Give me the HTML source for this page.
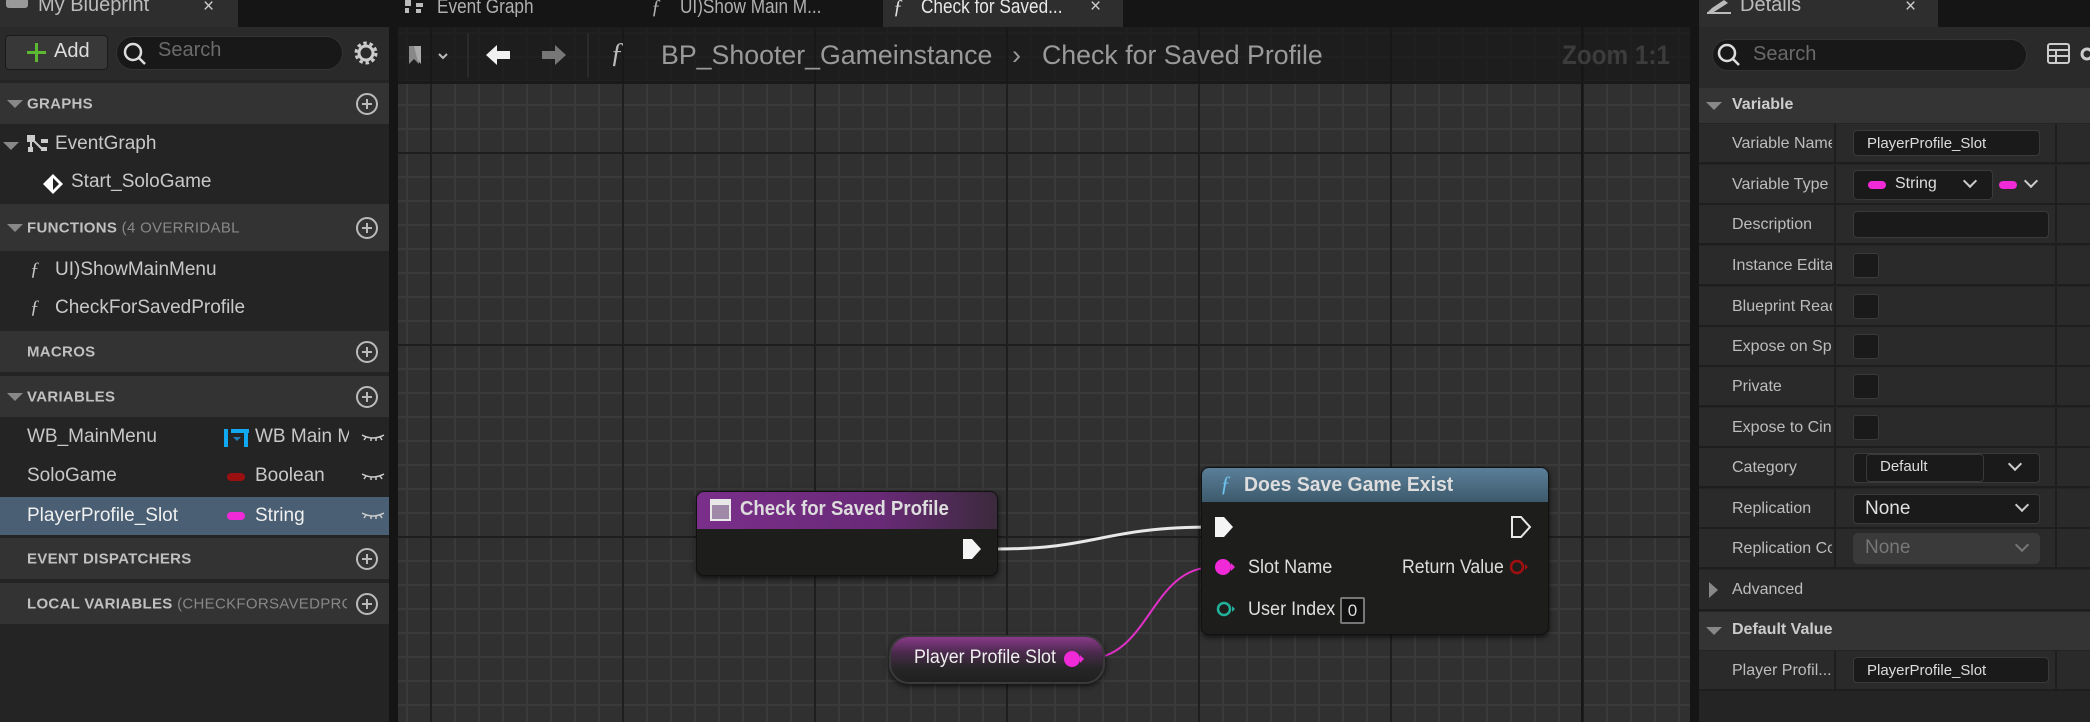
<!DOCTYPE html>
<html><head><meta charset="utf-8"><style>
*{margin:0;padding:0;box-sizing:border-box}
body{width:2090px;height:722px;overflow:hidden;background:#151515;font-family:"Liberation Sans",sans-serif;color:#c8c8c8;position:relative}
.a{position:absolute}
.t{position:absolute;white-space:nowrap}
.hdr{position:absolute;left:0;width:389px;background:#333;}
.hdr .tri{position:absolute;left:7px;top:50%;margin-top:-4px;width:0;height:0;border-left:8px solid transparent;border-right:8px solid transparent;border-top:8px solid #888}
.hdr .lbl{position:absolute;left:27px;top:50%;transform:translateY(-50%);font-size:15px;font-weight:bold;color:#c0c0c0;letter-spacing:.3px;white-space:nowrap;overflow:hidden}
.hdr .lbl span{font-weight:normal;color:#888}
.plus{position:absolute;right:11px;top:50%;margin-top:-11px;width:22px;height:22px;border:2px solid #bbb;border-radius:50%}
.plus:before{content:"";position:absolute;left:4px;top:8px;width:10px;height:2px;background:#bbb}
.plus:after{content:"";position:absolute;left:8px;top:4px;width:2px;height:10px;background:#bbb}
.item{position:absolute;font-size:19px;color:#c8c8c8;white-space:nowrap}
.row{position:absolute;left:1699px;width:391px;height:40px;background:#2a2a2a;border-bottom:2px solid #1e1e1e}
.row .l{position:absolute;left:33px;top:11px;font-size:16px;color:#bdbdbd;width:100px;overflow:hidden;white-space:nowrap}
.row .d1{position:absolute;left:135px;top:0;bottom:0;width:2px;background:#1e1e1e}
.row .d2{position:absolute;left:356px;top:0;bottom:0;width:2px;background:#1e1e1e}
.box{position:absolute;background:#1a1a1a;border:1px solid #3a3a3a;border-radius:4px}
.chk{position:absolute;left:154px;top:7px;width:26px;height:25px;background:#1a1a1a;border:1px solid #3a3a3a;border-radius:3px}
.chev{position:absolute;width:10px;height:10px;border-right:2px solid #ccc;border-bottom:2px solid #ccc;transform:rotate(45deg)}
.pill{position:absolute;width:18px;height:8px;border-radius:4px;background:#f02ad6}
.cond{display:inline-block;transform:scaleX(.86);transform-origin:left center}
</style></head><body>

<!-- graph background -->
<div class="a" style="left:398px;top:27px;width:1299px;height:695px;background-color:#303030;
background-image:linear-gradient(to right,#1e1e1e 0,#1e1e1e 2px,transparent 2px),linear-gradient(to bottom,#1e1e1e 0,#1e1e1e 2px,transparent 2px),linear-gradient(to right,#3a3a3a 0,#3a3a3a 2px,transparent 2px),linear-gradient(to bottom,#3a3a3a 0,#3a3a3a 2px,transparent 2px);
background-size:192px 192px,192px 192px,24px 24px,24px 24px;background-position:32px 125px,32px 125px,8px 5px,8px 5px"></div>
<div class="a" style="left:1581px;top:27px;width:2px;height:695px;background:#161616"></div>
<!-- graph toolbar -->
<div class="a" style="left:398px;top:27px;width:1299px;height:56px;background:rgba(22,22,22,.72)"></div>
<div class="a" style="left:398px;top:81px;width:1299px;height:3px;background:#1a1a1a"></div>
<svg class="a" style="left:405px;top:44px" width="50" height="24"><path d="M4 2h10v18l-5-5-5 5z" fill="#888"/><path d="M9 2h7v18l-3.5-4" fill="#aaa"/><path d="M34 10l4 4 4-4" stroke="#bbb" stroke-width="2" fill="none"/></svg>
<div class="a" style="left:467px;top:33px;width:2px;height:45px;background:#2a2a2a"></div>
<svg class="a" style="left:484px;top:42px" width="90" height="28"><path d="M2 13l11-10v6h13v8h-13v6z" fill="#f0f0f0"/><path d="M82 13l-11-10v6h-13v8h13v6z" fill="#777"/></svg>
<div class="a" style="left:587px;top:33px;width:2px;height:45px;background:#2a2a2a"></div>
<div class="t" style="left:610px;top:38px;font-size:28px;font-style:italic;font-family:'Liberation Serif',serif;color:#bbb">ƒ</div>
<div class="t" style="left:661px;top:40px;font-size:27px;color:#9a9a9a"><span class="cond" style="transform:scaleX(.99)">BP_Shooter_Gameinstance</span></div>
<div class="t" style="left:1012px;top:40px;font-size:27px;color:#9a9a9a">›</div>
<div class="t" style="left:1042px;top:40px;font-size:27px;color:#9a9a9a"><span class="cond" style="transform:scaleX(.99)">Check for Saved Profile</span></div>
<div class="t" style="left:1562px;top:40px;font-size:27px;font-weight:bold;color:#3c3c3c"><span class="cond" style="transform:scaleX(.9)">Zoom 1:1</span></div>

<!-- graph tabs -->
<svg class="a" style="left:404px;top:0" width="22" height="14"><rect x="1" y="0" width="6" height="6" fill="#bbb"/><rect x="1" y="8" width="4" height="5" fill="#bbb"/><rect x="12" y="3" width="7" height="4" fill="#bbb"/><rect x="12" y="9" width="5" height="4" fill="#bbb"/></svg>
<div class="t" style="left:437px;top:-4px;font-size:20px;color:#b0b0b0"><span class="cond">Event Graph</span></div>
<div class="t" style="left:651px;top:-4px;font-size:20px;font-style:italic;font-family:'Liberation Serif',serif;color:#b0b0b0">ƒ</div>
<div class="t" style="left:680px;top:-4px;font-size:20px;color:#b0b0b0"><span class="cond">UI)Show Main M...</span></div>
<div class="a" style="left:883px;top:0;width:240px;height:27px;background:#2e2e2e"></div>
<div class="t" style="left:893px;top:-4px;font-size:20px;font-style:italic;font-family:'Liberation Serif',serif;color:#e0e0e0">ƒ</div>
<div class="t" style="left:921px;top:-4px;font-size:20px;color:#e8e8e8"><span class="cond">Check for Saved...</span></div>
<div class="t" style="left:1090px;top:-4px;font-size:19px;color:#ccc">×</div>

<!-- wires -->
<svg class="a" style="left:0;top:0" width="2090" height="722">
<path d="M996 549 C1100 549 1100 527 1214 527" stroke="#e8e8e8" stroke-width="3" fill="none"/>
<path d="M1086 659 C1150 659 1150 567 1214 567" stroke="#e030c8" stroke-width="2" fill="none"/>
</svg>

<!-- node: Check for Saved Profile -->
<div class="a" style="left:696px;top:491px;width:302px;height:85px;border-radius:8px;background:#1d1e1c;box-shadow:0 2px 6px rgba(0,0,0,.7);border:1px solid #111;overflow:hidden">
 <div class="a" style="left:0;top:0;width:100%;height:37px;background:linear-gradient(to right,#7a2f8a 0%,#6a2a78 60%,#3b2a3d 100%)"></div>
 <div class="a" style="left:13px;top:7px;width:21px;height:22px;background:#a088a8;border:2px solid #e8e8e8;border-top-width:6px"></div>
 <div class="t" style="left:43px;top:6px;font-size:20px;font-weight:bold;color:#ddd"><span class="cond" style="transform:scaleX(.93)">Check for Saved Profile</span></div>
</div>
<svg class="a" style="left:961px;top:537px" width="22" height="24"><path d="M2 2h9l9 10-9 10h-9z" fill="#f4f4f4"/></svg>

<!-- node: Does Save Game Exist -->
<div class="a" style="left:1201px;top:467px;width:348px;height:168px;border-radius:8px;background:#1d1e1c;box-shadow:0 2px 6px rgba(0,0,0,.7);border:1px solid #111;overflow:hidden">
 <div class="a" style="left:0;top:0;width:100%;height:34px;background:linear-gradient(to bottom,#5a7f98,#3d5a6c)"></div>
 <div class="t" style="left:18px;top:3px;font-size:22px;font-style:italic;font-family:'Liberation Serif',serif;color:#6fc3f0">ƒ</div>
 <div class="t" style="left:42px;top:6px;font-size:20px;font-weight:bold;color:#ddd"><span class="cond" style="transform:scaleX(.97)">Does Save Game Exist</span></div>
 <div class="t" style="left:46px;top:89px;font-size:19px;color:#ddd"><span class="cond" style="transform:scaleX(.95)">Slot Name</span></div>
 <div class="t" style="left:200px;top:89px;font-size:19px;color:#ddd"><span class="cond" style="transform:scaleX(.93)">Return Value</span></div>
 <div class="t" style="left:46px;top:131px;font-size:19px;color:#ddd"><span class="cond" style="transform:scaleX(.95)">User Index</span></div>
 <div class="a" style="left:138px;top:129px;width:25px;height:27px;border:2px solid #777;border-radius:2px;background:#111;color:#ddd;font-size:17px;text-align:center;line-height:23px">0</div>
</div>
<svg class="a" style="left:1213px;top:515px" width="22" height="24"><path d="M2 2h9l9 10-9 10h-9z" fill="#f4f4f4"/></svg>
<svg class="a" style="left:1510px;top:515px" width="22" height="24"><path d="M2 2h9l9 10-9 10h-9z" fill="none" stroke="#e8e8e8" stroke-width="2"/></svg>
<svg class="a" style="left:1214px;top:557px" width="22" height="20"><circle cx="9" cy="10" r="8" fill="#f02ad6"/><path d="M17 6l4 4-4 4z" fill="#f02ad6"/></svg>
<svg class="a" style="left:1508px;top:557px" width="22" height="20"><circle cx="9" cy="10" r="6" fill="none" stroke="#a01010" stroke-width="2.5"/><path d="M17 7l3 3-3 3z" fill="#a01010"/></svg>
<svg class="a" style="left:1215px;top:599px" width="22" height="20"><circle cx="9" cy="10" r="6" fill="none" stroke="#21b39a" stroke-width="2.5"/><path d="M17 7l3 3-3 3z" fill="#21b39a"/></svg>

<!-- node: Player Profile Slot -->
<div class="a" style="left:889px;top:635px;width:216px;height:49px;border-radius:20px;background:linear-gradient(to bottom,#8a3a8a 0%,#4a2a4c 35%,#262626 70%,#202020 100%);border:2px solid #3a3a3a;box-shadow:0 2px 6px rgba(0,0,0,.7)"></div>
<div class="t" style="left:914px;top:647px;font-size:19px;color:#eee"><span class="cond" style="transform:scaleX(.94)">Player Profile Slot</span></div>
<svg class="a" style="left:1062px;top:649px" width="24" height="20"><circle cx="10" cy="10" r="8" fill="#f02ad6"/><path d="M18 6l4 4-4 4z" fill="#f02ad6"/></svg>

<!-- LEFT PANEL -->
<div class="a" style="left:0;top:0;width:389px;height:722px;background:#242424"></div>
<div class="a" style="left:389px;top:0;width:9px;height:722px;background:#151515"></div>
<div class="a" style="left:0;top:0;width:389px;height:27px;background:#151515"></div>
<div class="a" style="left:0;top:0;width:238px;height:27px;background:#2e2e2e"></div>
<div class="a" style="left:6px;top:0;width:22px;height:8px;background:#999;border-radius:0 0 3px 3px"></div>
<div class="t" style="left:38px;top:-6px;font-size:20px;color:#bbb">My Blueprint</div>
<div class="t" style="left:203px;top:-4px;font-size:19px;color:#ccc">×</div>
<div class="a" style="left:0;top:27px;width:389px;height:53px;background:#2a2a2a"></div>
<div class="a" style="left:5px;top:35px;width:103px;height:35px;background:#383838;border:1px solid #1a1a1a;border-radius:4px"></div>
<div class="a" style="left:27px;top:51px;width:19px;height:3px;background:#5cb830"></div>
<div class="a" style="left:35px;top:43px;width:3px;height:19px;background:#5cb830"></div>
<div class="t" style="left:54px;top:40px;font-size:20px;color:#ddd">Add</div>
<div class="a" style="left:116px;top:36px;width:227px;height:34px;background:#181818;border:1px solid #333;border-radius:17px"></div>
<svg class="a" style="left:122px;top:41px" width="26" height="26"><circle cx="11" cy="11" r="8" stroke="#ddd" stroke-width="2.5" fill="none"/><path d="M17 17l6 6" stroke="#ddd" stroke-width="2.5"/></svg>
<div class="t" style="left:158px;top:39px;font-size:20px;color:#6a6a6a">Search</div>
<svg class="a" style="left:353px;top:40px" width="26" height="26"><circle cx="13" cy="13" r="7" fill="none" stroke="#ccc" stroke-width="3"/><circle cx="13" cy="13" r="10" fill="none" stroke="#ccc" stroke-width="3" stroke-dasharray="3.5 2.8"/></svg>

<div class="hdr" style="top:83px;height:41px"><div class="tri"></div><div class="lbl">GRAPHS</div><div class="plus"></div></div>
<div class="a" style="left:3px;top:142px;border-left:8px solid transparent;border-right:8px solid transparent;border-top:8px solid #888"></div>
<svg class="a" style="left:27px;top:135px" width="22" height="20"><rect x="0" y="0" width="8" height="7" fill="#ccc"/><rect x="1" y="12" width="5" height="5" fill="#ccc"/><rect x="14" y="4" width="7" height="4" fill="#ccc"/><rect x="14" y="12" width="6" height="4" fill="#ccc"/><path d="M4 6v8M6 5l9 9" stroke="#ccc" stroke-width="2"/></svg>
<div class="item" style="left:55px;top:133px">EventGraph</div>
<svg class="a" style="left:41px;top:172px" width="24" height="24"><path d="M12 2l10 10-10 10-10-10z" fill="#fff"/><path d="M12 6l6 6-6 6z" fill="#222"/></svg>
<div class="item" style="left:71px;top:171px">Start_SoloGame</div>

<div class="hdr" style="top:204px;height:47px"><div class="tri"></div><div class="lbl">FUNCTIONS <span>(4 OVERRIDABL</span></div><div class="plus"></div></div>
<div class="item" style="left:30px;top:259px;font-family:'Liberation Serif',serif;font-style:italic">ƒ</div>
<div class="item" style="left:55px;top:259px">UI)ShowMainMenu</div>
<div class="item" style="left:30px;top:297px;font-family:'Liberation Serif',serif;font-style:italic">ƒ</div>
<div class="item" style="left:55px;top:297px">CheckForSavedProfile</div>

<div class="hdr" style="top:331px;height:41px"><div class="lbl">MACROS</div><div class="plus"></div></div>
<div class="hdr" style="top:376px;height:41px"><div class="tri"></div><div class="lbl">VARIABLES</div><div class="plus"></div></div>

<div class="item" style="left:27px;top:426px">WB_MainMenu</div>
<svg class="a" style="left:224px;top:427px" width="25" height="22"><rect x="0" y="2" width="4" height="18" fill="#11a8f0"/><rect x="7" y="2" width="18" height="4" fill="#11a8f0"/><rect x="20" y="6" width="4" height="14" fill="#11a8f0"/><path d="M9 10l4 4 4-4z" fill="#1e7fb8"/></svg>
<div class="item" style="left:255px;top:426px;width:94px;overflow:hidden">WB Main Menu</div>
<div class="item" style="left:27px;top:465px">SoloGame</div>
<div class="a" style="left:227px;top:473px;width:18px;height:8px;border-radius:4px;background:#9a1010"></div>
<div class="item" style="left:255px;top:465px">Boolean</div>
<div class="a" style="left:0;top:497px;width:389px;height:38px;background:#4a5f73"></div>
<div class="item" style="left:27px;top:505px;color:#f0f0f0">PlayerProfile_Slot</div>
<div class="a" style="left:227px;top:512px;width:18px;height:8px;border-radius:4px;background:#f02ad6"></div>
<div class="item" style="left:255px;top:505px;color:#f0f0f0">String</div>
<svg class="a" style="left:360px;top:430px" width="26" height="100"><g stroke="#ccc" stroke-width="1.5" fill="none"><path d="M2 5q11 6 22 0M6 7l-2 3M11 8v3M16 8v3M20 7l2 3"/><path transform="translate(0,39)" d="M2 5q11 6 22 0M6 7l-2 3M11 8v3M16 8v3M20 7l2 3"/><path transform="translate(0,78)" d="M2 5q11 6 22 0M6 7l-2 3M11 8v3M16 8v3M20 7l2 3"/></g></svg>

<div class="hdr" style="top:538px;height:41px"><div class="lbl">EVENT DISPATCHERS</div><div class="plus"></div></div>
<div class="hdr" style="top:583px;height:41px"><div class="lbl" style="width:320px">LOCAL VARIABLES <span>(CHECKFORSAVEDPROFILE)</span></div><div class="plus"></div></div>

<!-- DETAILS PANEL -->
<div class="a" style="left:1690px;top:0;width:400px;height:722px;background:#242424"></div>
<div class="a" style="left:1690px;top:0;width:9px;height:722px;background:#151515"></div>
<div class="a" style="left:1699px;top:0;width:391px;height:27px;background:#151515"></div>
<div class="a" style="left:1699px;top:0;width:239px;height:27px;background:#2e2e2e"></div>
<svg class="a" style="left:1706px;top:0" width="26" height="14"><path d="M2 12l4-4 12-8 4 3-14 9z" fill="#bbb"/><path d="M1 13h24" stroke="#bbb" stroke-width="2"/></svg>
<div class="t" style="left:1740px;top:-6px;font-size:20px;color:#bbb">Details</div>
<div class="t" style="left:1905px;top:-4px;font-size:19px;color:#ccc">×</div>
<div class="a" style="left:1699px;top:27px;width:391px;height:61px;background:#2a2a2a"></div>
<div class="a" style="left:1712px;top:39px;width:315px;height:32px;background:#181818;border:1px solid #333;border-radius:16px"></div>
<svg class="a" style="left:1716px;top:42px" width="26" height="26"><circle cx="11" cy="11" r="8" stroke="#ddd" stroke-width="2.5" fill="none"/><path d="M17 17l6 6" stroke="#ddd" stroke-width="2.5"/></svg>
<div class="t" style="left:1753px;top:43px;font-size:20px;color:#6a6a6a">Search</div>
<svg class="a" style="left:2047px;top:43px" width="43" height="24"><rect x="1" y="1" width="21" height="19" rx="2" fill="none" stroke="#ccc" stroke-width="2"/><path d="M1 7h21M1 13h21M9 7v13" stroke="#ccc" stroke-width="2"/><circle cx="40" cy="11" r="5" fill="none" stroke="#ccc" stroke-width="3"/></svg>

<div class="a" style="left:1699px;top:88px;width:391px;height:35px;background:#343434"></div>
<div class="a" style="left:1706px;top:102px;border-left:8px solid transparent;border-right:8px solid transparent;border-top:8px solid #888"></div>
<div class="t" style="left:1732px;top:96px;font-size:16px;font-weight:bold;color:#ccc">Variable</div>

<div class="row" style="top:124px"><div class="l">Variable Name</div><div class="d1"></div><div class="d2"></div><div class="box" style="left:154px;top:6px;width:187px;height:26px;color:#ddd;font-size:15px;padding:4px 0 0 13px">PlayerProfile_Slot</div></div>
<div class="row" style="top:165px"><div class="l">Variable Type</div><div class="d1"></div><div class="d2"></div>
 <div class="box" style="left:154px;top:5px;width:140px;height:30px"></div><div class="pill" style="left:169px;top:16px"></div><div class="t" style="left:196px;top:10px;font-size:16px;color:#ddd">String</div><div class="chev" style="left:266px;top:11px"></div>
 <div class="pill" style="left:300px;top:16px"></div><div class="chev" style="left:327px;top:11px"></div></div>
<div class="row" style="top:205px"><div class="l">Description</div><div class="d1"></div><div class="d2"></div><div class="box" style="left:154px;top:6px;width:196px;height:27px"></div></div>
<div class="row" style="top:246px"><div class="l">Instance Editable</div><div class="d1"></div><div class="d2"></div><div class="chk"></div></div>
<div class="row" style="top:287px"><div class="l">Blueprint Read Only</div><div class="d1"></div><div class="d2"></div><div class="chk"></div></div>
<div class="row" style="top:327px"><div class="l">Expose on Spawn</div><div class="d1"></div><div class="d2"></div><div class="chk"></div></div>
<div class="row" style="top:367px"><div class="l">Private</div><div class="d1"></div><div class="d2"></div><div class="chk"></div></div>
<div class="row" style="top:408px"><div class="l">Expose to Cinematics</div><div class="d1"></div><div class="d2"></div><div class="chk"></div></div>
<div class="row" style="top:448px"><div class="l">Category</div><div class="d1"></div><div class="d2"></div><div class="box" style="left:154px;top:5px;width:187px;height:30px"></div><div class="box" style="left:167px;top:6px;width:118px;height:28px;color:#ddd;font-size:15px;padding:3px 0 0 13px">Default</div><div class="chev" style="left:311px;top:11px"></div></div>
<div class="row" style="top:489px"><div class="l">Replication</div><div class="d1"></div><div class="d2"></div><div class="box" style="left:154px;top:5px;width:187px;height:30px;color:#e0e0e0;font-size:19px;padding:3px 0 0 11px">None</div><div class="chev" style="left:318px;top:11px"></div></div>
<div class="row" style="top:529px"><div class="l">Replication Condition</div><div class="d1"></div><div class="d2"></div><div class="a" style="left:154px;top:4px;width:187px;height:31px;background:#3a3a3a;border-radius:5px;color:#777;font-size:19px;padding:4px 0 0 12px">None</div><div class="chev" style="left:318px;top:11px;border-color:#777"></div></div>
<div class="a" style="left:1699px;top:570px;width:391px;height:41px;background:#2a2a2a;border-bottom:2px solid #1e1e1e"></div>
<div class="a" style="left:1709px;top:582px;border-top:8px solid transparent;border-bottom:8px solid transparent;border-left:9px solid #888"></div>
<div class="t" style="left:1732px;top:581px;font-size:16px;color:#bdbdbd">Advanced</div>
<div class="a" style="left:1699px;top:612px;width:391px;height:38px;background:#343434"></div>
<div class="a" style="left:1706px;top:627px;border-left:8px solid transparent;border-right:8px solid transparent;border-top:8px solid #888"></div>
<div class="t" style="left:1732px;top:621px;font-size:16px;font-weight:bold;color:#ccc">Default Value</div>
<div class="row" style="top:651px"><div class="l">Player Profil...</div><div class="d1"></div><div class="d2"></div><div class="box" style="left:154px;top:6px;width:196px;height:26px;color:#ddd;font-size:15px;padding:4px 0 0 13px">PlayerProfile_Slot</div></div>
</body></html>
